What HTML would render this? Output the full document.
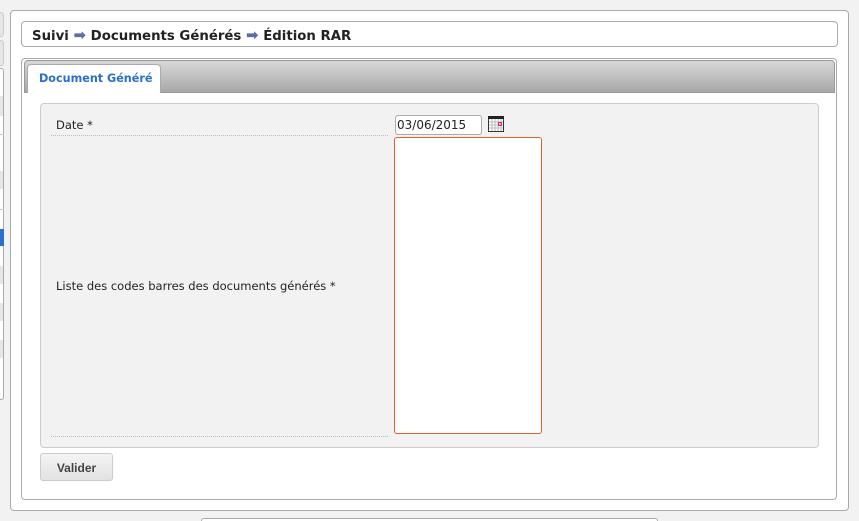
<!DOCTYPE html>
<html><head><meta charset="utf-8"><style>
*{box-sizing:border-box}
html,body{margin:0;width:859px;height:521px;overflow:hidden}
body{background:#f2f2f2;font-family:"DejaVu Sans","Liberation Sans",sans-serif;position:relative;font-size:11.5px;color:#222}
.a{position:absolute}
</style></head><body>
<div class="a" style="left:-6px;top:12px;width:10px;height:25px;background:#e6e6e6;border:1px solid #ccc;border-radius:3px"></div>
<div class="a" style="left:-6px;top:40px;width:10px;height:26px;background:#e6e6e6;border:1px solid #ccc;border-radius:3px"></div>
<div class="a" style="left:-6px;top:68px;width:10px;height:332px;background:#fff;border:1px solid #aaa;border-radius:3px"></div>
<div class="a" style="left:0;top:96px;width:3px;height:20px;background:#e6e6e6"></div>
<div class="a" style="left:0;top:134px;width:4px;height:1px;background:#ccc"></div>
<div class="a" style="left:0;top:171px;width:3px;height:18px;background:#e6e6e6"></div>
<div class="a" style="left:0;top:209px;width:4px;height:1px;background:#ccc"></div>
<div class="a" style="left:0;top:229px;width:4px;height:17px;background:#2a6fc9"></div>
<div class="a" style="left:0;top:266px;width:3px;height:18px;background:#e6e6e6"></div>
<div class="a" style="left:0;top:303px;width:3px;height:18px;background:#e6e6e6"></div>
<div class="a" style="left:0;top:340px;width:3px;height:18px;background:#e6e6e6"></div>

<div class="a" style="left:10px;top:10px;width:839px;height:501px;background:#fff;border:1px solid #aaa;border-radius:4px"></div>
<div class="a" style="left:21px;top:21px;width:817px;height:26px;border:1px solid #aaa;border-radius:4px;background:#fff;font-weight:bold;font-size:13.3px;padding:4px 0 0 10px;color:#222;white-space:nowrap">Suivi <span style="color:#5a6fa8;font-size:15px">➡</span> Documents Générés <span style="color:#5a6fa8;font-size:15px">➡</span> Édition RAR</div>
<div class="a" style="left:21px;top:58px;width:816px;height:442px;border:1px solid #aaa;border-radius:4px;background:#fff"></div>
<div class="a" style="left:24px;top:60px;width:811px;height:33px;border-radius:4px 4px 0 0;background:linear-gradient(#d8d8d8,#a8a8a8);border:1px solid #999"></div>
<div class="a" style="left:27px;top:64px;width:134px;height:29px;background:#fff;border:1px solid #aaa;border-bottom:none;border-radius:4px 4px 0 0;color:#2a6fc9;font-weight:bold;font-size:11.2px;padding:7px 0 0 11px;white-space:nowrap">Document Généré</div>
<div class="a" style="left:40px;top:103px;width:779px;height:345px;background:#f2f2f2;border:1px solid #ccc;border-radius:4px"></div>
<div class="a" style="left:56px;top:118px">Date *</div>
<div class="a" style="left:51px;top:135px;width:337px;border-top:1px dotted #bbb"></div>
<div class="a" style="left:395px;top:115px;width:87px;height:20px;border:1px solid #aaa;border-radius:3px;background:#fff;padding:2px 0 0 1px;font-size:12px">03/06/2015</div>
<svg class="a" style="left:488px;top:116px" width="16" height="16" viewBox="0 0 16 16"><rect x="0.5" y="0.5" width="15" height="15" fill="#fff" stroke="#333"/><rect x="0" y="0" width="16" height="3" fill="#222"/><path d="M1 6H15M1 9H15M1 12H15M4 3V15M7 3V15M10 3V15M13 3V15" stroke="#bbb" stroke-width="1"/><rect x="10.5" y="6.5" width="3" height="3" fill="none" stroke="#e0287a"/></svg>
<div class="a" style="left:394px;top:137px;width:148px;height:297px;border:1px solid #e06030;border-radius:3px;background:#fff"></div>
<div class="a" style="left:56px;top:279px;white-space:nowrap">Liste des codes barres des documents générés *</div>
<div class="a" style="left:51px;top:436px;width:337px;border-top:1px dotted #bbb"></div>
<div class="a" style="left:40px;top:453px;width:73px;height:28px;border:1px solid #ccc;border-radius:3px;background:linear-gradient(#f4f4f4,#e2e2e2);font-weight:bold;color:#444;font-size:12px;text-align:center;padding-top:7px;font-family:'Liberation Sans',sans-serif">Valider</div>
<div class="a" style="left:201px;top:518px;width:457px;height:10px;border:1px solid #aaa;border-radius:3px;background:#fff"></div>
</body></html>
